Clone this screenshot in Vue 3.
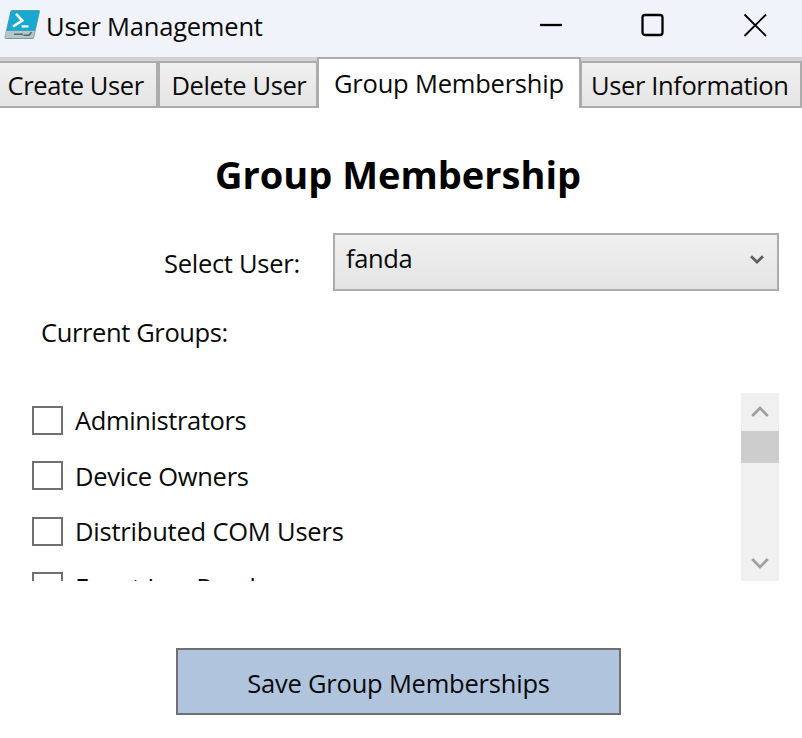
<script setup>
import { ref } from 'vue'

const tabs = [
  { id: 'create', label: 'Create User' },
  { id: 'delete', label: 'Delete User' },
  { id: 'group', label: 'Group Membership' },
  { id: 'info', label: 'User Information' },
]
const active = ref('group')
const groups = [
  { id: 'administrators', label: 'Administrators' },
  { id: 'owners', label: 'Device Owners' },
  { id: 'dcom', label: 'Distributed COM Users' },
  { id: 'readers', label: 'Event Log Readers' },
]
</script>

<template>
  <div class="window">
    <header class="titlebar">
      <svg class="logo" width="38" height="32" viewBox="0 0 38 32">
        <path d="M8.200 1h26.400q1.700 0 1.300 1.700L30.300 27.800q-.4 2.200-2.400 2.200H2.200q-2 0-1.600-2L6.200 2.700Q6.600 1 8.200 1Z" fill="#7f999d" />
        <path d="M8.500 1.500h25.800q1.300 0 1 1.300L31 21.500H2.500L6.900 2.800q.3-1.300 1.600-1.300Z" fill="#17a9cf" />
        <path d="M2.300 22h28.500l-1.200 5.200q-.4 1.800-2 1.800H2.400q-1.500 0-1.200-1.600Z" fill="#b4c7ca" />
        <path d="M10 25.300h9M19.500 26.300h5.500l2.500-3" fill="none" stroke="#526a70" stroke-width="1.600" />
        <path d="M12 4.800l6.300 6.700-9.300 6" fill="none" stroke="#fff" stroke-width="2.600" />
        <path d="M17.500 17.400h7" stroke="#fff" stroke-width="2.200" />
      </svg>
      <h1 class="title"><span class="t-title">User Management</span></h1>
      <div class="controls">
        <svg width="24" height="24" viewBox="0 0 24 24"><path d="M1 12h22" /></svg>
        <svg width="24" height="24" viewBox="0 0 24 24"><rect x="1.500" y="2" width="20" height="20" rx="2.500" /></svg>
        <svg class="thin" width="24" height="24" viewBox="0 0 24 24"><path d="M1.500 1.500l21.500 21.500M23 1.500l-21.500 21.500" /></svg>
      </div>
    </header>

    <nav class="tabs">
      <button
        v-for="tab in tabs"
        :key="tab.id"
        :class="['tab', tab.id, { selected: tab.id === active }]"
        @click="active = tab.id"
      ><span :class="'t-' + tab.id">{{ tab.label }}</span></button>
    </nav>

    <main class="content">
      <h2 class="heading"><span class="t-heading">Group Membership</span></h2>
      <div class="user-row">
        <span class="select-label"><span class="t-select">Select User:</span></span>
        <div class="combo">
          <span class="t-fanda">fanda</span>
          <svg width="14" height="10" viewBox="0 0 14 10"><path d="M1 1.200L7 7l6-5.800" /></svg>
        </div>
      </div>
      <div class="current"><span class="t-current">Current Groups:</span></div>
      <section class="list">
        <div class="items">
          <label v-for="group in groups" :key="group.id" class="item">
            <input type="checkbox" class="box" />
            <span :class="'t-' + group.id">{{ group.label }}</span>
          </label>
        </div>
        <div class="scrollbar">
          <svg width="18" height="13" viewBox="0 0 18 13"><path d="M1.200 11L9 3l7.800 8" /></svg>
          <div class="thumb"></div>
          <svg class="down" width="18" height="13" viewBox="0 0 18 13"><path d="M1.200 2L9 10l7.800-8" /></svg>
        </div>
      </section>
      <button class="save"><span class="t-save">Save Group Memberships</span></button>
    </main>
  </div>
</template>

<style>
body {
  margin: 0;
  background: #fff;
}
</style>

<style scoped>
.window {
  width: 802px;
  height: 738px;
  overflow: hidden;
  box-sizing: border-box;
  background: #fff;
  color: #0a0a0a;
  font: 25.5px/34px "Open Sans", "Noto Sans", sans-serif;
  letter-spacing: -0.38px;
  white-space: nowrap;
}
.window * {
  box-sizing: border-box;
}
button {
  font: inherit;
  color: inherit;
  letter-spacing: inherit;
  margin: 0;
  border-radius: 0;
}
svg {
  display: block;
  flex: none;
}
.t-title,
.t-group,
.t-dcom,
.t-save {
  letter-spacing: -0.21px;
}
.t-heading {
  letter-spacing: 0;
}
.t-select,
.t-owners {
  letter-spacing: -0.28px;
}
.t-readers {
  letter-spacing: -0.05px;
}
.titlebar {
  display: flex;
  height: 57px;
  padding-left: 4px;
  background: #f0f3f9;
}
.logo {
  margin-top: 9px;
}
.title {
  margin: 9px 0 0 4px;
  font: inherit;
}
.controls {
  display: flex;
  gap: 78px;
  margin: 13px 35px 0 auto;
}
.controls svg {
  fill: none;
  stroke: #000;
  stroke-width: 2.3;
}
.controls .thin {
  stroke-width: 1.9;
}
.tabs {
  display: flex;
  align-items: flex-end;
  height: 51px;
  background: linear-gradient(#d1d1d1 0 8px, #fff 8px);
}
.tab {
  height: 47px;
  padding: 0;
  border: 2px solid #acacac;
  background: linear-gradient(#f0f0f0, #e4e4e4);
  text-align: left;
}
.create {
  width: 158px;
  border-left: 0;
  padding-left: 7.5px;
}
.delete {
  width: 160px;
  padding-left: 11.5px;
}
.tab.selected {
  height: 51px;
  width: 264px;
  margin: 0 -1px;
  padding: 0 0 2px 15px;
  border-bottom: 0;
  background: #fff;
  z-index: 1;
}
.info {
  width: 222px;
  padding-left: 9px;
}
.content {
  display: flex;
  flex-direction: column;
  padding: 46px 23px 0 32px;
}
.heading {
  height: 40px;
  margin: 0 0 39px 183px;
  font-size: 38px;
  line-height: 40px;
  font-weight: 700;
  color: #000;
}
.user-row {
  display: flex;
  height: 58px;
}
.select-label {
  width: 301px;
  padding: 13px 0 0 132px;
}
.combo {
  display: flex;
  flex: 1;
  justify-content: space-between;
  padding: 6px 13px 0 11px;
  border: 2px solid #acacac;
  background: linear-gradient(#f0f0f0, #e4e4e4);
}
.combo svg {
  margin-top: 14px;
  fill: none;
  stroke: #606060;
  stroke-width: 2.8;
}
.current {
  height: 102px;
  padding: 24px 0 0 9px;
}
.list {
  display: flex;
  justify-content: space-between;
  height: 188px;
  overflow: hidden;
}
.items {
  padding-top: 11.6px;
}
.item {
  display: flex;
  align-items: center;
  gap: 12px;
  height: 32px;
  margin-bottom: 23.6px;
}
.item span {
  margin-top: -0.6px;
}
.box {
  appearance: none;
  width: 31px;
  height: 29px;
  margin: -1px 0 0;
  border: 2px solid #707070;
  background: #fff;
}
.scrollbar {
  display: flex;
  flex-direction: column;
  align-items: center;
  width: 38px;
  padding: 12px 0 11px;
  background: #f0f0f0;
}
.scrollbar svg {
  fill: none;
  stroke: #a0a0a0;
  stroke-width: 2.7;
}
.thumb {
  width: 38px;
  height: 32px;
  margin-top: 13px;
  background: #cdcdcd;
}
.down {
  margin-top: auto;
}
.save {
  width: 445px;
  height: 67px;
  margin: 67px 0 0 144px;
  padding: 3px 0 0;
  border: 2px solid #707070;
  background: #b0c4de;
}
</style>
